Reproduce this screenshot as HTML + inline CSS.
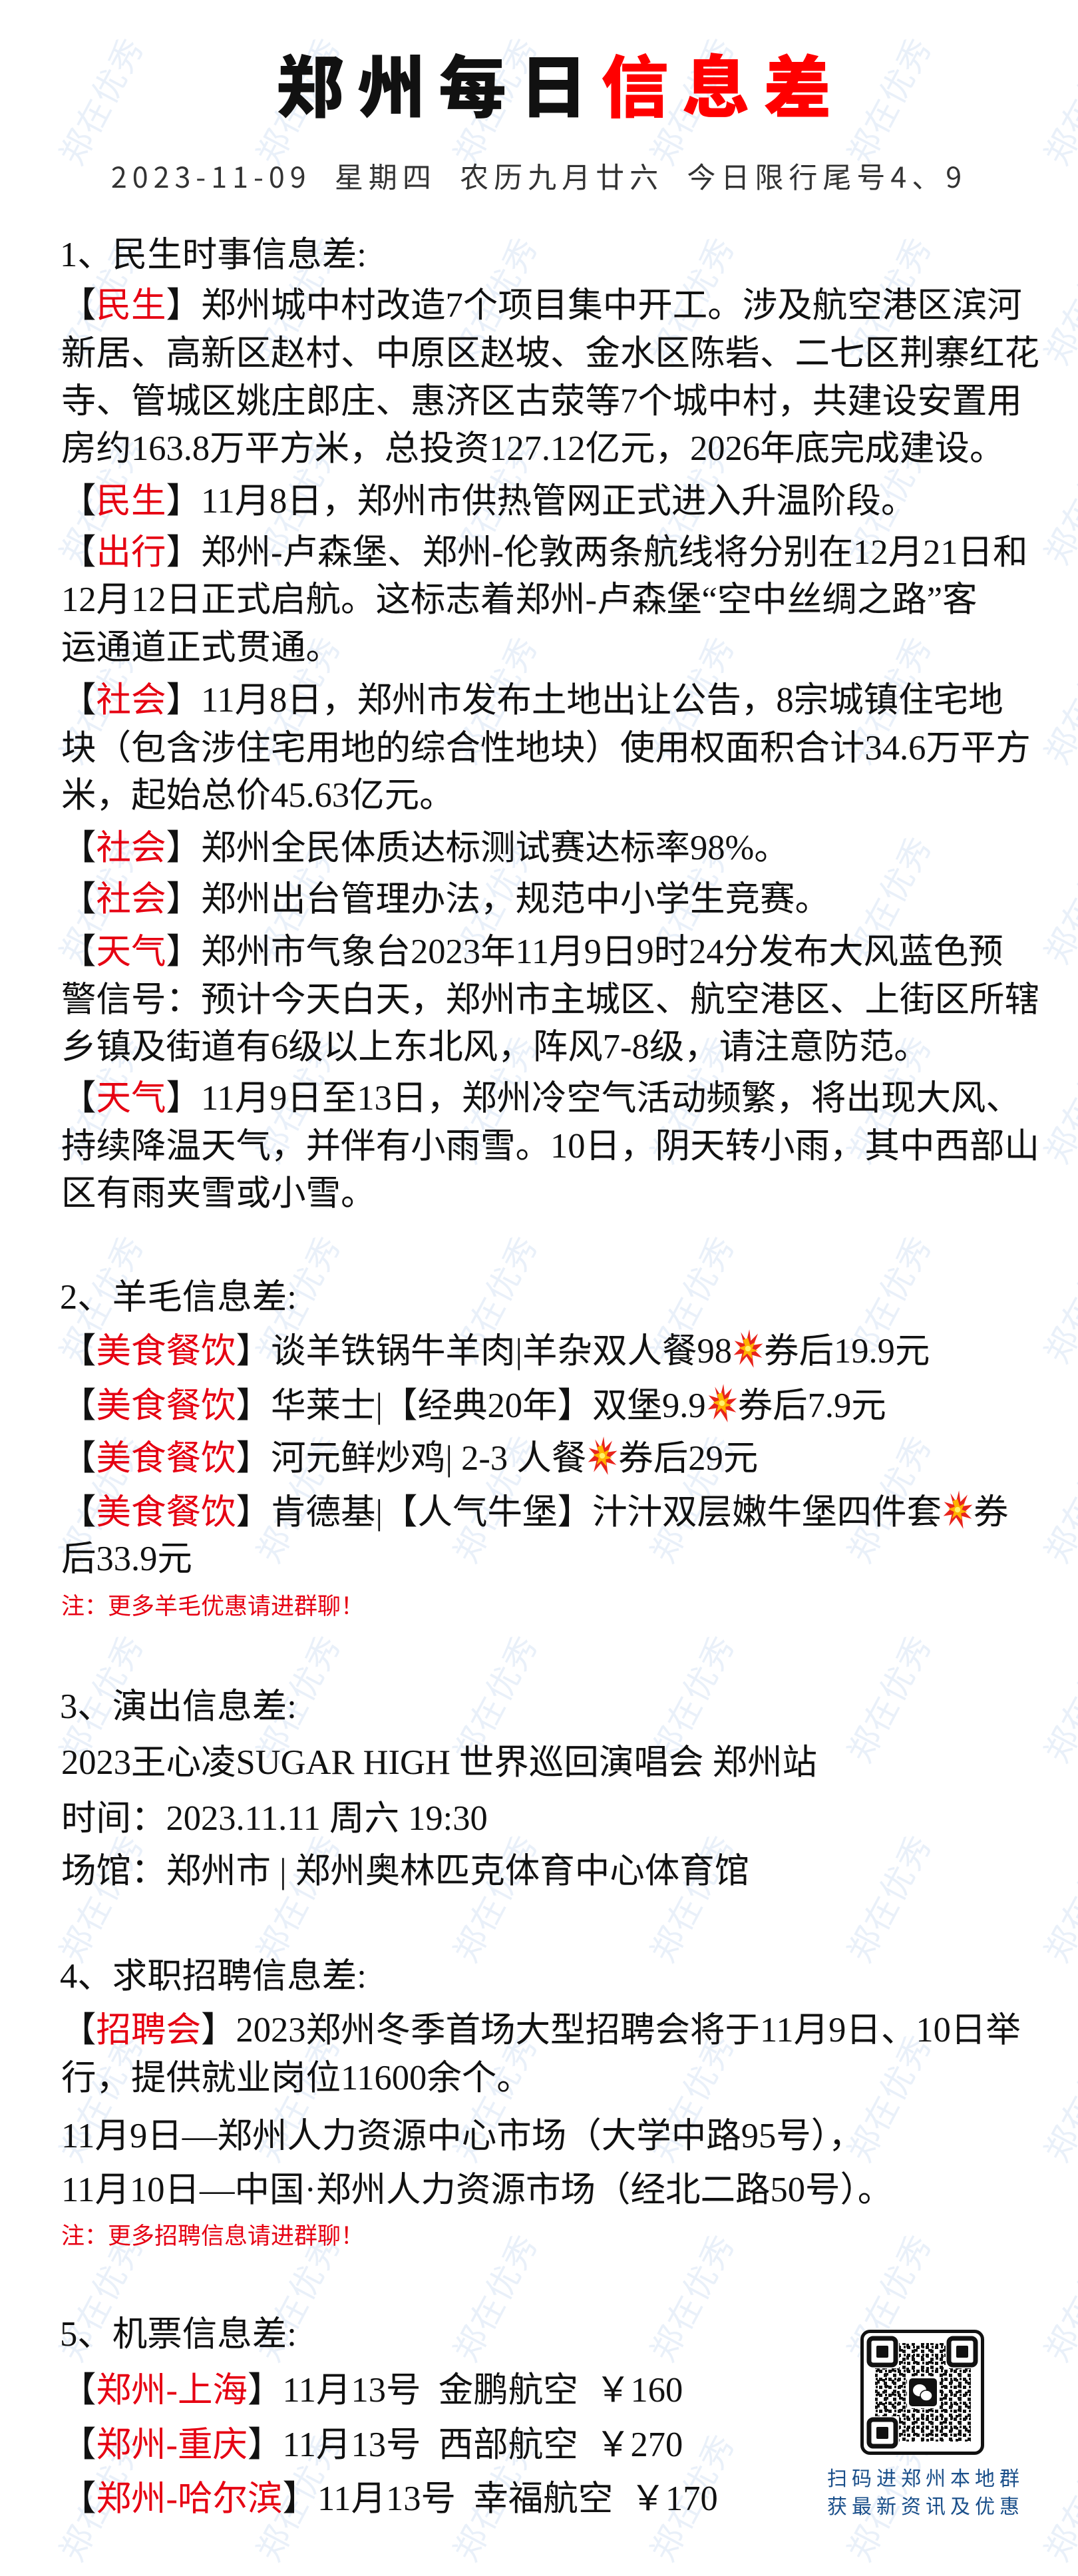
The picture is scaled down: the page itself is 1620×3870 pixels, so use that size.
<!DOCTYPE html>
<html><head><meta charset="utf-8">
<style>
html,body{margin:0;padding:0;background:#fff;}
body{width:1620px;height:3870px;position:relative;overflow:hidden;font-family:"Liberation Sans","Noto Sans CJK SC",sans-serif;color:#111;}
.wm{position:absolute;font-family:"Noto Sans CJK SC",sans-serif;font-size:50px;color:#e9f0f9;white-space:nowrap;transform:translate(-50%,-50%) rotate(-62deg);letter-spacing:2px;}
.l{position:absolute;left:92px;white-space:nowrap;font-size:52.5px;line-height:72px;height:72px;font-family:"Liberation Serif","Noto Sans CJK SC",sans-serif;color:#111;}
.h{left:90px;}
.r{color:#e60012;}
.n{position:absolute;left:92px;font-size:35px;line-height:40px;color:#e60012;white-space:nowrap;font-family:"Noto Sans CJK SC",sans-serif;}
.b{display:inline-block;width:48px;height:62px;vertical-align:-10px;}
</style></head><body>
<div id="wms"></div>
<script>
var s='';for(var y=150;y<3870;y+=300){for(var x=150;x<1720;x+=296){s+='<div class="wm" style="left:'+x+'px;top:'+y+'px">郑在优秀</div>';}}
document.getElementById('wms').innerHTML=s;
</script>

<div style="position:absolute;left:415px;top:60px;font-size:102px;line-height:130px;font-weight:900;letter-spacing:20px;white-space:nowrap;font-family:'Noto Sans CJK SC',sans-serif;">郑州每日<span style="color:#ff0000">信息差</span></div>
<div style="position:absolute;left:0;width:1620px;text-align:center;top:236px;font-size:43px;line-height:56px;color:#333;letter-spacing:8px;white-space:nowrap;font-family:'Noto Sans CJK SC',sans-serif;">2023-11-09&nbsp; 星期四&nbsp; 农历九月廿六&nbsp; 今日限行尾号4、9</div>

<div class="l h" style="top:347px">1、民生时事信息差:</div>
<div class="l" style="top:423px">【<span class="r">民生</span>】郑州城中村改造7个项目集中开工。涉及航空港区滨河</div>
<div class="l" style="top:495px">新居、高新区赵村、中原区赵坡、金水区陈砦、二七区荆寨红花</div>
<div class="l" style="top:567px">寺、管城区姚庄郎庄、惠济区古荥等7个城中村，共建设安置用</div>
<div class="l" style="top:638px">房约163.8万平方米，总投资127.12亿元，2026年底完成建设。</div>
<div class="l" style="top:717px">【<span class="r">民生</span>】11月8日，郑州市供热管网正式进入升温阶段。</div>
<div class="l" style="top:794px">【<span class="r">出行</span>】郑州-卢森堡、郑州-伦敦两条航线将分别在12月21日和</div>
<div class="l" style="top:865px">12月12日正式启航。这标志着郑州-卢森堡“空中丝绸之路”客</div>
<div class="l" style="top:937px">运通道正式贯通。</div>
<div class="l" style="top:1016px">【<span class="r">社会</span>】11月8日，郑州市发布土地出让公告，8宗城镇住宅地</div>
<div class="l" style="top:1088px">块（包含涉住宅用地的综合性地块）使用权面积合计34.6万平方</div>
<div class="l" style="top:1159px">米，起始总价45.63亿元。</div>
<div class="l" style="top:1238px">【<span class="r">社会</span>】郑州全民体质达标测试赛达标率98%。</div>
<div class="l" style="top:1315px">【<span class="r">社会</span>】郑州出台管理办法，规范中小学生竞赛。</div>
<div class="l" style="top:1394px">【<span class="r">天气</span>】郑州市气象台2023年11月9日9时24分发布大风蓝色预</div>
<div class="l" style="top:1466px">警信号：预计今天白天，郑州市主城区、航空港区、上街区所辖</div>
<div class="l" style="top:1537px">乡镇及街道有6级以上东北风，阵风7-8级，请注意防范。</div>
<div class="l" style="top:1614px">【<span class="r">天气</span>】11月9日至13日，郑州冷空气活动频繁，将出现大风、</div>
<div class="l" style="top:1686px">持续降温天气，并伴有小雨雪。10日，阴天转小雨，其中西部山</div>
<div class="l" style="top:1757px">区有雨夹雪或小雪。</div>

<svg width="0" height="0" style="position:absolute"><defs>
<symbol id="bs" viewBox="0 0 44 58"><polygon points="24,2 26,18 36,8 30,24 43,22 32,32 42,42 28,38 30,56 20,40 10,52 14,36 2,38 12,28 3,18 16,22 12,6 20,18" fill="#e8241c"/><polygon points="22,14 25,24 32,20 28,29 36,32 27,34 28,44 21,36 14,42 17,32 9,28 18,25 15,17" fill="#ffb300"/><circle cx="22" cy="29" r="4" fill="#fff36a"/></symbol>
</defs></svg>

<div class="l h" style="top:1913px">2、羊毛信息差:</div>
<div class="l" style="top:1994px">【<span class="r">美食餐饮</span>】谈羊铁锅牛羊肉|羊杂双人餐98<svg class="b"><use href="#bs"/></svg>券后19.9元</div>
<div class="l" style="top:2076px">【<span class="r">美食餐饮</span>】华莱士|【经典20年】双堡9.9<svg class="b"><use href="#bs"/></svg>券后7.9元</div>
<div class="l" style="top:2155px">【<span class="r">美食餐饮</span>】河元鲜炒鸡| 2-3 人餐<svg class="b"><use href="#bs"/></svg>券后29元</div>
<div class="l" style="top:2236px">【<span class="r">美食餐饮</span>】肯德基|【人气牛堡】汁汁双层嫩牛堡四件套<svg class="b"><use href="#bs"/></svg>券</div>
<div class="l" style="top:2306px">后33.9元</div>
<div class="n" style="top:2391px">注：更多羊毛优惠请进群聊！</div>

<div class="l h" style="top:2528px">3、演出信息差:</div>
<div class="l" style="top:2612px">2023王心凌SUGAR HIGH 世界巡回演唱会 郑州站</div>
<div class="l" style="top:2696px">时间：2023.11.11 周六 19:30</div>
<div class="l" style="top:2775px">场馆：郑州市 | 郑州奥林匹克体育中心体育馆</div>

<div class="l h" style="top:2933px">4、求职招聘信息差:</div>
<div class="l" style="top:3014px">【<span class="r">招聘会</span>】2023郑州冬季首场大型招聘会将于11月9日、10日举</div>
<div class="l" style="top:3086px">行，提供就业岗位11600余个。</div>
<div class="l" style="top:3173px">11月9日—郑州人力资源中心市场（大学中路95号），</div>
<div class="l" style="top:3254px">11月10日—中国·郑州人力资源市场（经北二路50号）。</div>
<div class="n" style="top:3337px">注：更多招聘信息请进群聊！</div>

<div class="l h" style="top:3471px">5、机票信息差:</div>
<div class="l" style="top:3555px">【<span class="r">郑州-上海</span>】11月13号&nbsp; 金鹏航空&nbsp; ￥160</div>
<div class="l" style="top:3637px">【<span class="r">郑州-重庆</span>】11月13号&nbsp; 西部航空&nbsp; ￥270</div>
<div class="l" style="top:3718px">【<span class="r">郑州-哈尔滨</span>】11月13号&nbsp; 幸福航空&nbsp; ￥170</div>

<svg style="position:absolute;left:1293px;top:3500px" width="186" height="188" viewBox="0 0 186 188">
<defs>
<pattern id="p1" width="14" height="12" patternUnits="userSpaceOnUse"><rect x="0" y="0" width="5" height="5" fill="#111"/><rect x="7" y="6" width="5" height="5" fill="#111"/><rect x="9" y="0" width="3" height="4" fill="#111"/></pattern>
<pattern id="p2" width="22" height="18" patternUnits="userSpaceOnUse"><rect x="3" y="3" width="4" height="6" fill="#111"/><rect x="14" y="11" width="6" height="4" fill="#111"/><rect x="11" y="2" width="4" height="4" fill="#111"/></pattern>
</defs>
<rect x="2.5" y="2.5" width="181" height="183" rx="12" fill="#fff" stroke="#111" stroke-width="5"/>
<rect x="22" y="20" width="144" height="148" fill="url(#p1)"/>
<rect x="22" y="20" width="144" height="148" fill="url(#p2)"/>
<rect x="10" y="10" width="48" height="48" fill="#fff"/><rect x="128" y="10" width="48" height="48" fill="#fff"/><rect x="10" y="130" width="48" height="48" fill="#fff"/>
<rect x="13" y="13" width="40" height="40" rx="6" fill="none" stroke="#111" stroke-width="7"/><rect x="24" y="24" width="18" height="18" rx="2" fill="#111"/>
<rect x="133" y="13" width="40" height="40" rx="6" fill="none" stroke="#111" stroke-width="7"/><rect x="144" y="24" width="18" height="18" rx="2" fill="#111"/>
<rect x="13" y="135" width="40" height="40" rx="6" fill="none" stroke="#111" stroke-width="7"/><rect x="24" y="146" width="18" height="18" rx="2" fill="#111"/>
<rect x="70" y="70" width="48" height="48" fill="#fff"/>
<rect x="73" y="73" width="42" height="42" rx="5" fill="#111"/>
<ellipse cx="89" cy="91" rx="10" ry="9" fill="#fff"/><ellipse cx="99" cy="99" rx="9" ry="8" fill="#fff" stroke="#111" stroke-width="1.5"/>
</svg>
<div style="position:absolute;left:1243px;top:3700px;width:290px;font-size:30px;line-height:42px;color:#1a4f8a;letter-spacing:7px;white-space:nowrap;font-family:'Noto Sans CJK SC',sans-serif;">扫码进郑州本地群<br>获最新资讯及优惠</div>
</body></html>
